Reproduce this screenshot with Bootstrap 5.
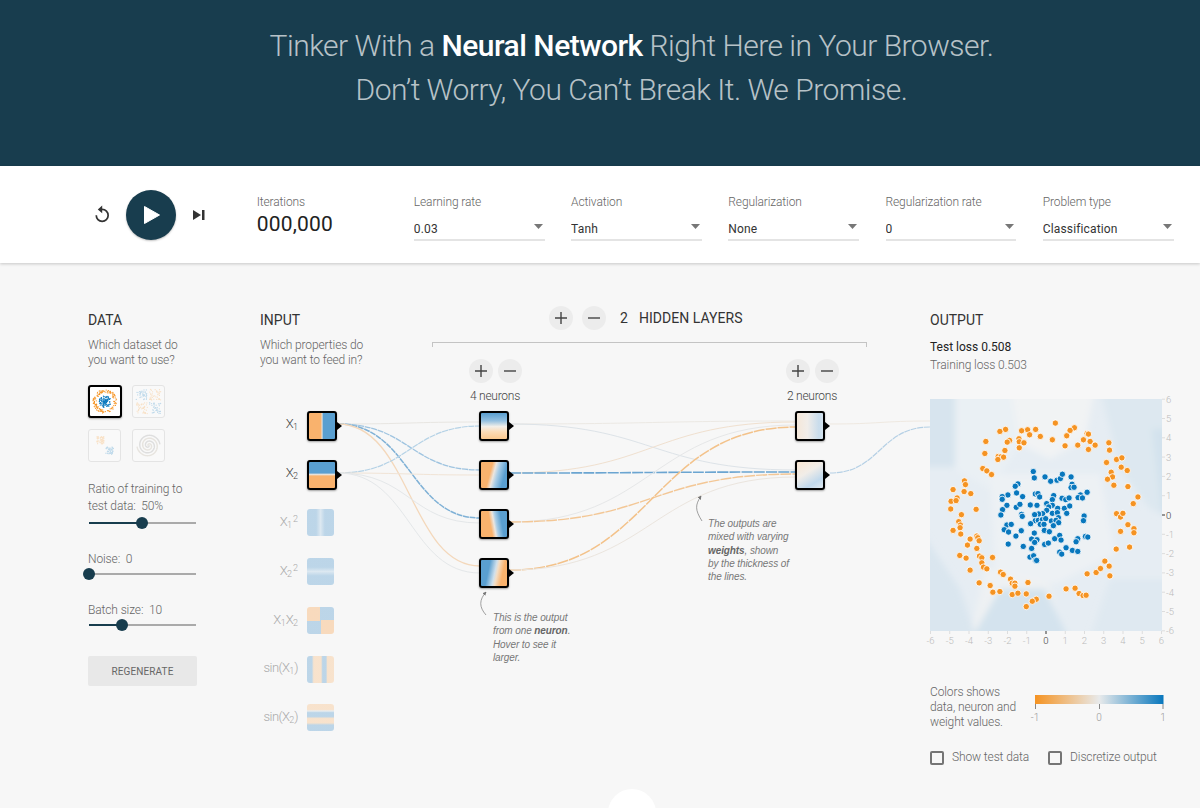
<!DOCTYPE html>
<html lang="en">
<head>
<meta charset="utf-8">
<title>Tinker With a Neural Network</title>
<link href="https://cdn.jsdelivr.net/npm/bootstrap@5.3.0/dist/css/bootstrap.min.css" rel="stylesheet">
<style>
html,body{height:808px;overflow:hidden}
body{font-family:Roboto,"Helvetica Neue",sans-serif;font-weight:300;background:#f7f7f7;color:#666;font-size:12px;line-height:15px;position:relative;letter-spacing:-.12px}
.hero{height:166px;background:#183d4e;color:rgba(255,255,255,.7);font-size:30px;font-weight:300;line-height:44px;padding-top:24px;letter-spacing:-.5px}
.hero b{font-weight:500;color:#fff}
.hero p{margin:0}
.hero-inner{padding-left:63px;width:1200px}
.ctrlbar{height:97px;margin-bottom:1px;background:#fff;box-shadow:0 1px 3px rgba(0,0,0,.2);position:relative;padding-top:29px}
.transport{width:257px;padding-left:92px;height:50px;margin-top:-5px}
.playbtn{width:50px;height:50px;border-radius:50%;background:#183d4e;border:0;padding:0;box-shadow:0 1px 2px rgba(0,0,0,.25)}
.ghostbtn{background:none;border:0;padding:0;line-height:0}
.iter{width:157.5px}
.lbl{color:#666;font-size:12px;line-height:14px;display:block}
.iternum{font-size:21px;line-height:30px;color:#222;letter-spacing:.2px;font-weight:400}
.pick{width:131px;margin-right:26.5px}
.pick select{font-size:12px;font-family:inherit;font-weight:400;color:#333;letter-spacing:.15px;border:0;border-bottom:2px solid #e4e4e4;border-radius:0;padding:8px 0 1px;margin-top:4px;height:28px;line-height:17px;background-color:transparent;background-image:url("data:image/svg+xml,%3Csvg xmlns='http://www.w3.org/2000/svg' width='9' height='5'%3E%3Cpath d='M0 0h9L4.5 5z' fill='%23777'/%3E%3C/svg%3E");background-size:9px 5px;background-position:right 2px center;box-shadow:none}
.stage{height:544px}
.col-data{width:109px;padding:48px 0 0 88px;box-sizing:content-box;flex:none;margin-right:63px}
.col-net{width:670px;flex:none;position:relative}
.col-out{width:270px;flex:none;padding-top:48px}
.sect{font-size:14px;line-height:16px;color:#333;margin:0 0 10px;font-weight:400;letter-spacing:0}
.desc{margin:0;line-height:15px}
.thumbs{display:grid;grid-template-columns:33px 33px;gap:10.5px;margin:17px 0 20px}
.thumb{width:33px;height:33px;border:1px solid #e4e4e4;border-radius:3px;padding:1px;line-height:0;background:#f9f9f9}
.thumb svg{display:block;width:100%;height:100%;opacity:.24}
.thumb.on{border:2px solid #000;background:#fff;padding:0;width:34px;box-shadow:0 1px 2px rgba(0,0,0,.3)}
.thumb.on svg{opacity:1}
.sl{display:block;margin-bottom:22.5px}
.sl .form-range{display:block;width:119px;height:12px;margin:1.5px 0 0 -5.5px;padding:0;background:none}
.form-range.track::-webkit-slider-runnable-track{height:12px;background:linear-gradient(90deg,transparent 6px,#183d4e 6px,#183d4e var(--p),#aaa var(--p),#aaa calc(100% - 6px),transparent calc(100% - 6px)) center/100% 2px no-repeat}
.form-range.track::-webkit-slider-thumb{width:12px;height:12px;margin-top:0;background:#183d4e;border:0;border-radius:50%;-webkit-appearance:none;appearance:none;box-shadow:none}
.regen{width:109px;height:30px;background:#e8e8e8;border:0;border-radius:2px;color:#666;font-size:10px;padding:0;margin-top:2.5px;letter-spacing:.1px}
.nethead{padding-top:48px;height:136px}
.nethead-in{width:172px;flex:none}
.nethead-hid{width:435px;flex:none;margin-top:-10px}
.hidtitle{height:32px;padding-left:117px;gap:9px;color:#333}
.rnd{width:24px;height:24px;border-radius:50%;background:#ececec;border:0;padding:0;line-height:0;display:inline-flex;align-items:center;justify-content:center}
.hidlabel{font-size:14px;color:#333;margin-left:5px;letter-spacing:.05px;font-weight:400}
.hidlabel span{margin-right:11px}
.bracket{height:5px;border:1px solid #c4c4c4;border-bottom:0;margin-top:8px}
.lays{padding:12px 5px 0 13px}
.lay{width:100px;text-align:center;color:#444;letter-spacing:-.25px}
.lay .d-flex{gap:5px;margin-bottom:6px}
.canvas{position:relative;height:340px}
.links{position:absolute;left:0;top:0}
.nd{position:absolute;width:30px;height:30px;border:2px solid #000;border-radius:3px;box-shadow:0 1px 2px rgba(0,0,0,.35)}
.nd::after{content:"";position:absolute;right:-7px;top:9px;border-left:5px solid #000;border-top:4px solid transparent;border-bottom:4px solid transparent}
.nd.off{width:27px;height:27px;border:0;box-shadow:none;opacity:.42}
.nd.off::after{display:none}
.flab{position:absolute;right:632px;width:60px;text-align:right;font-size:13px;line-height:20px;color:#444;white-space:nowrap;letter-spacing:-.6px}
.flab.off{color:#aaa}
.flab sub{font-size:9px;letter-spacing:0}
.flab sup{font-size:9px;margin-left:1px;letter-spacing:0}
.note{position:absolute;width:96px;font-size:10px;line-height:13.3px;font-style:italic;font-family:"Liberation Sans",sans-serif;font-weight:400;color:#777;letter-spacing:-.1px;white-space:nowrap}
.note b{font-weight:700;color:#666}
.loss{line-height:18px;margin:1px 0 25px;height:36px}
.loss .t{color:#222;font-weight:400;letter-spacing:0}
.plot{width:250px;height:250px;display:block;overflow:visible;letter-spacing:0}
.legend{margin-top:36px;gap:20px}
.legtext{width:85px;line-height:15px;flex:none;white-space:nowrap}
.legbar{overflow:visible;margin-top:7px;letter-spacing:0}
.opts{gap:19px;margin-top:20px}
.opts .form-check{padding:0;margin:0;min-height:0;display:flex;align-items:center;gap:8px}
.opts .form-check-input{width:14px;height:14px;margin:0;float:none;background-color:transparent;border:2px solid #757575;border-radius:2px;box-shadow:none}
.opts label{color:#666}
.moon{position:absolute;left:608px;top:789px;width:48px;height:48px;border-radius:50%;background:#fff}
</style>
</head>
<body>
<header class="hero text-center">
  <div class="hero-inner">
    <p>Tinker With a <b>Neural Network</b> Right Here in Your Browser.</p>
    <p>Don’t Worry, You Can’t Break It. We Promise.</p>
  </div>
</header>

<section class="ctrlbar d-flex">
  <div class="transport d-flex align-items-center">
    <button class="ghostbtn" style="margin-right:14px" aria-label="Reset">
      <svg width="20" height="20" viewBox="0 0 20 20"><path d="M10.200 3.600V.6L5.800 4.400l4.400 3.800V5.200a5.100 5.100 0 1 1-5.100 5.100H3.400a6.800 6.800 0 1 0 6.800-6.700z" fill="#333"/></svg>
    </button>
    <button class="playbtn" aria-label="Play">
      <svg width="50" height="50" viewBox="0 0 50 50"><path d="M19 16.500L34 25 19 33.500z" fill="#fff" stroke="#fff" stroke-width="1" transform="translate(-.5 0)"/></svg>
    </button>
    <button class="ghostbtn" style="margin-left:16px" aria-label="Step">
      <svg width="14" height="12" viewBox="0 0 14 12"><path d="M1 1l8 5-8 5z" fill="#333"/><rect x="10" y="1" width="2.500" height="10" fill="#333"/></svg>
    </button>
  </div>
  <div class="iter">
    <span class="lbl">Iterations</span>
    <div class="iternum">000,000</div>
  </div>
  <div class="pick"><label class="lbl">Learning rate</label><select class="form-select"><option>0.03</option></select></div>
  <div class="pick"><label class="lbl">Activation</label><select class="form-select"><option>Tanh</option></select></div>
  <div class="pick"><label class="lbl">Regularization</label><select class="form-select"><option>None</option></select></div>
  <div class="pick"><label class="lbl">Regularization rate</label><select class="form-select"><option>0</option></select></div>
  <div class="pick"><label class="lbl">Problem type</label><select class="form-select"><option>Classification</option></select></div>
</section>

<main class="stage d-flex">
  <section class="col-data">
    <h4 class="sect">DATA</h4>
    <p class="desc">Which dataset do<br>you want to use?</p>
    <div class="thumbs">
      <div class="thumb on"><svg id="th1" viewBox="30 27 694 695"></svg></div>
      <div class="thumb"><svg id="th2" viewBox="0 0 100 100"></svg></div>
      <div class="thumb"><svg id="th3" viewBox="0 0 100 100"></svg></div>
      <div class="thumb"><svg id="th4" viewBox="0 0 100 100"></svg></div>
    </div>
    <label class="sl">Ratio of training to<br><span style="line-height:19px">test data:&nbsp; 50%</span>
      <input type="range" class="form-range track" min="10" max="90" step="10" value="50" style="--p:50%">
    </label>
    <label class="sl">Noise:&nbsp; 0
      <input type="range" class="form-range track" min="0" max="50" step="5" value="0" style="--p:6px">
    </label>
    <label class="sl">Batch size:&nbsp; 10
      <input type="range" class="form-range track" min="1" max="30" step="1" value="10" style="--p:33%">
    </label>
    <button class="btn regen">REGENERATE</button>
  </section>

  <section class="col-net">
    <div class="nethead d-flex">
      <div class="nethead-in">
        <h4 class="sect">INPUT</h4>
        <p class="desc">Which properties do<br>you want to feed in?</p>
      </div>
      <div class="nethead-hid">
        <div class="hidtitle d-flex align-items-center">
          <button class="rnd" aria-label="Add layer"><svg width="12" height="12" viewBox="0 0 12 12"><path d="M6 0v12M0 6h12" stroke="#444" stroke-width="1.400"/></svg></button>
          <button class="rnd" aria-label="Remove layer"><svg width="12" height="12" viewBox="0 0 12 12"><path d="M0 6h12" stroke="#444" stroke-width="1.400"/></svg></button>
          <div class="hidlabel"><span>2</span>HIDDEN LAYERS</div>
        </div>
        <div class="bracket"></div>
        <div class="lays d-flex justify-content-between">
          <div class="lay">
            <div class="d-flex justify-content-center">
              <button class="rnd" aria-label="Add neuron"><svg width="12" height="12" viewBox="0 0 12 12"><path d="M6 0v12M0 6h12" stroke="#444" stroke-width="1.400"/></svg></button>
              <button class="rnd" aria-label="Remove neuron"><svg width="12" height="12" viewBox="0 0 12 12"><path d="M0 6h12" stroke="#444" stroke-width="1.400"/></svg></button>
            </div>
            4 neurons
          </div>
          <div class="lay">
            <div class="d-flex justify-content-center">
              <button class="rnd" aria-label="Add neuron"><svg width="12" height="12" viewBox="0 0 12 12"><path d="M6 0v12M0 6h12" stroke="#444" stroke-width="1.400"/></svg></button>
              <button class="rnd" aria-label="Remove neuron"><svg width="12" height="12" viewBox="0 0 12 12"><path d="M0 6h12" stroke="#444" stroke-width="1.400"/></svg></button>
            </div>
            2 neurons
          </div>
        </div>
      </div>
    </div>

    <div class="canvas">
      <svg class="links" width="670" height="340" viewBox="260 400 670 340" fill="none" stroke-linecap="butt">
        <marker id="ah" viewBox="0 0 6 6" refX="5" refY="3" markerWidth="5" markerHeight="5" orient="auto"><path d="M0 0l6 3-6 3z" fill="#777"/></marker>
        <!-- input to first hidden layer -->
        <path d="M338 424C410 424 410 422 480 422" stroke="#e8e6e2" stroke-width="1"/>
        <path d="M338 424C410 424 410 470 480 470" stroke="#9fc4e0" stroke-width="1.300" stroke-dasharray="6 .7"/>
        <path d="M338 424C410 424 410 518 480 518" stroke="#7fb1d6" stroke-width="1.500" stroke-dasharray="6 .7"/>
        <path d="M338 424C410 424 410 566 480 566" stroke="#f4d8bb" stroke-width="1.300"/>
        <path d="M338 473C410 473 410 426 480 426" stroke="#b5d2e6" stroke-width="1.200" stroke-dasharray="6 .7"/>
        <path d="M338 473C410 473 410 475 480 475" stroke="#f1e4d6" stroke-width="1"/>
        <path d="M338 473C410 473 410 523 480 523" stroke="#e4e7e9" stroke-width="1"/>
        <path d="M338 473C410 473 410 573 480 573" stroke="#e4e7e9" stroke-width="1"/>
        <!-- first to second hidden layer -->
        <path d="M510 424C652 424 652 421 796 421" stroke="#ece9e4" stroke-width="1"/>
        <path d="M510 424C652 424 652 470 796 470" stroke="#dde3e8" stroke-width="1"/>
        <path d="M510 473C652 473 652 422 796 422" stroke="#f0e0cf" stroke-width="1"/>
        <path d="M510 473C652 473 652 472 796 472" stroke="#6ba5d1" stroke-width="1.600" stroke-dasharray="11 1.200"/>
        <path d="M510 522C652 522 652 425 796 425" stroke="#e6e7e8" stroke-width="1"/>
        <path d="M510 522C652 522 652 474 796 474" stroke="#f3c796" stroke-width="1.400" stroke-dasharray="11 1"/>
        <path d="M510 570C652 570 652 427 796 427" stroke="#f3c28a" stroke-width="1.500" stroke-dasharray="11 1"/>
        <path d="M510 570C652 570 652 477 796 477" stroke="#ebe5de" stroke-width="1"/>
        <!-- second hidden layer to output -->
        <path d="M830 424C880 424 880 421 930 421" stroke="#efe9e1" stroke-width="1"/>
        <path d="M830 473C880 473 880 427 930 427" stroke="#b5d0e5" stroke-width="1.200" stroke-dasharray="6 .7"/>
        <!-- annotation arrows -->
        <path d="M702 521C695 510 695 505 701 496" stroke="#888" stroke-width=".8" marker-end="url(#ah)"/>
        <path d="M486 615C479 607 479 600 486 592" stroke="#888" stroke-width=".8" marker-end="url(#ah)"/>
      </svg>

      <div class="flab" style="top:14px">X<sub>1</sub></div>
      <div class="flab" style="top:63px">X<sub>2</sub></div>
      <div class="flab off" style="top:112px">X<sub>1</sub><sup>2</sup></div>
      <div class="flab off" style="top:161px">X<sub>2</sub><sup>2</sup></div>
      <div class="flab off" style="top:210px">X<sub>1</sub>X<sub>2</sub></div>
      <div class="flab off" style="top:258px">sin(X<sub>1</sub>)</div>
      <div class="flab off" style="top:307px">sin(X<sub>2</sub>)</div>

      <div class="nd" style="left:47px;top:11px;background:linear-gradient(90deg,#f9b26d 0 46%,#e6e2dc 50%,#5a9fd0 55%)"></div>
      <div class="nd" style="left:47px;top:60px;background:linear-gradient(180deg,#5a9fd0 0 42%,#e6e2dc 48%,#f9b26d 54%)"></div>
      <div class="nd off" style="left:47px;top:109px;background:linear-gradient(90deg,#6ba7d4 0 34%,#b7d3e8 50%,#6ba7d4 66%)"></div>
      <div class="nd off" style="left:47px;top:158px;background:linear-gradient(180deg,#6ba7d4 0 34%,#b7d3e8 50%,#6ba7d4 66%)"></div>
      <div class="nd off" style="left:47px;top:207px;background:conic-gradient(#6ba7d4 0 25%,#f9b26d 25% 50%,#6ba7d4 50% 75%,#f9b26d 75%)"></div>
      <div class="nd off" style="left:47px;top:256px;background:linear-gradient(90deg,#6ba7d4 0 18%,#f9c692 25% 52%,#6ba7d4 58% 70%,#f9c692 76%)"></div>
      <div class="nd off" style="left:47px;top:304px;background:linear-gradient(180deg,#f9c692 0 20%,#d5dfe5 26%,#6ba7d4 32% 46%,#f9c692 54% 70%,#6ba7d4 78%)"></div>

      <div class="nd" style="left:219px;top:11px;background:linear-gradient(180deg,#5a9fd0 0,#94c0e0 30%,#f2efe9 52%,#fbdcb8 72%,#fbc98f 100%)"></div>
      <div class="nd" style="left:219px;top:60px;background:linear-gradient(105deg,#f9b26d 0 36%,#ece6df 48%,#a9cde6 60%,#5a9fd0 82%)"></div>
      <div class="nd" style="left:219px;top:109px;background:linear-gradient(80deg,#f9b26d 0 38%,#ece6df 50%,#a9cde6 58%,#5a9fd0 76%)"></div>
      <div class="nd" style="left:219px;top:158px;background:linear-gradient(102deg,#5a9fd0 0 30%,#cfe0ec 52%,#f3ddc4 60%,#f9b26d 78%)"></div>
      <div class="nd" style="left:535px;top:11px;background:linear-gradient(90deg,#f4e7d9 0,#f1ede9 40%,#c8dcec 85%,#d6e4ef 100%)"></div>
      <div class="nd" style="left:535px;top:60px;background:linear-gradient(148deg,#f8e6d2 0,#f1ede8 40%,#c0d8ec 75%,#dfe8ef 100%)"></div>

      <div class="note" style="left:448px;top:117px">The outputs are<br>mixed with varying<br><b>weights</b>, shown<br>by the thickness of<br>the lines.</div>
      <div class="note" style="left:233px;top:211px;width:84px">This is the output<br>from one <b>neuron</b>.<br>Hover to see it<br>larger.</div>
    </div>
  </section>

  <section class="col-out">
    <h4 class="sect">OUTPUT</h4>
    <div class="loss"><div class="t">Test loss 0.508</div><div>Training loss 0.503</div></div>
    <svg class="plot" id="plot" viewBox="0 0 250 250"></svg>
    <div class="legend d-flex">
      <div class="legtext">Colors shows<br>data, neuron and<br>weight values.</div>
      <svg class="legbar" width="136" height="36" viewBox="0 0 136 36">
        <defs><linearGradient id="lg"><stop offset="0" stop-color="#f59322"/><stop offset=".5" stop-color="#e8eaeb"/><stop offset="1" stop-color="#0877bd"/></linearGradient></defs>
        <rect x="0" y="3" width="128.500" height="9" fill="url(#lg)"/>
        <path d="M.5 12v5M64.500 12v5M128 12v5" stroke="#888" stroke-width="1"/>
        <g font-size="10" fill="#999" text-anchor="middle" font-family="Roboto"><text x="0" y="29">-1</text><text x="64" y="29">0</text><text x="128" y="29">1</text></g>
      </svg>
    </div>
    <div class="opts d-flex">
      <div class="form-check"><input class="form-check-input" type="checkbox" id="c1"><label class="form-check-label" for="c1">Show test data</label></div>
      <div class="form-check"><input class="form-check-input" type="checkbox" id="c2"><label class="form-check-label" for="c2">Discretize output</label></div>
    </div>
  </section>
</main>
<div class="moon"></div>

<script src="https://cdn.jsdelivr.net/npm/bootstrap@5.3.0/dist/js/bootstrap.bundle.min.js"></script>
<script>
var O=[405,99,462,113,449,121,439,137,500,130,504,132,489,149,509,154,524,165,472,165,504,178,434,167,396,149,360,139,346,118,322,119,304,122,328,134,296,146,297,155,311,158,297,173,268,151,261,156,254,181,256,118,239,124,197,154,194,190,234,199,242,200,250,201,233,208,188,235,200,242,214,253,565,158,567,180,558,217,588,208,604,203,602,231,620,241,572,246,576,260,561,267,580,285,622,289,652,320,638,340,133,272,136,283,99,298,132,304,152,310,111,323,93,333,108,331,92,356,168,357,124,373,116,394,121,404,120,412,99,420,122,431,150,446,170,437,173,442,177,451,142,464,170,474,119,495,138,503,178,497,185,502,217,501,185,517,190,530,200,535,150,539,241,545,249,552,271,566,177,577,210,585,218,605,239,603,276,578,284,578,284,587,323,576,276,612,293,608,318,610,386,617,348,626,336,632,318,648,437,595,464,593,476,609,488,615,497,614,500,550,527,546,540,534,553,512,566,527,568,556,588,370,600,380,607,369,622,403,640,415,640,427,600,423,627,470,587,476];
var B=[339,244,342,263,374,260,391,273,410,270,420,265,426,252,452,260,455,282,452,292,461,291,500,306,480,314,473,322,486,323,425,324,436,328,446,323,293,281,285,288,289,308,263,314,246,319,246,327,307,319,345,311,353,310,358,320,400,316,396,328,260,345,247,358,242,374,288,351,299,342,330,344,350,345,379,340,396,345,385,350,412,354,432,354,448,347,439,369,379,360,367,370,355,371,343,373,304,372,306,378,396,369,411,367,414,382,491,377,489,391,345,391,354,390,366,388,376,385,393,392,407,390,415,397,331,400,360,402,371,402,399,406,260,404,273,402,252,418,265,425,303,421,287,437,342,428,372,420,387,424,334,446,350,448,343,456,403,445,418,435,422,449,373,462,384,458,472,445,467,454,437,472,456,480,472,483,418,485,424,491,495,438,502,440,264,461,309,468,334,474,329,500,340,496,346,509,349,510];
function dots(A,c,r,sw){var s='';for(var i=0;i<A.length;i+=2)s+='<circle cx="'+A[i]+'" cy="'+A[i+1]+'" r="'+r+'" fill="'+c+'"'+(sw?' stroke="#fff" stroke-width="'+sw+'"':'')+'/>';return s}
/* dataset thumbnails */
document.getElementById('th1').innerHTML=dots(O,'#f59322',15)+dots(B,'#0877bd',15);
var seed=7;function rnd(){seed=(seed*16807)%2147483647;return seed/2147483647}
function cluster(cx,cy,sp,n,c){var s='';for(var i=0;i<n;i++){s+='<circle cx="'+(cx+(rnd()-.5)*sp)+'" cy="'+(cy+(rnd()-.5)*sp)+'" r="2.2" fill="'+c+'"/>'}return s}
document.getElementById('th2').innerHTML=cluster(27,27,38,40,'#0877bd')+cluster(73,27,38,40,'#f59322')+cluster(27,73,38,40,'#f59322')+cluster(73,73,38,40,'#0877bd');
document.getElementById('th3').innerHTML=cluster(36,32,26,50,'#f59322')+cluster(68,68,26,50,'#0877bd');
var sp='',sp2='';for(var t=0;t<120;t++){var a=t/120*4*Math.PI,rr=t/120*40;sp+=(t?'L':'M')+(50+rr*Math.cos(a)).toFixed(1)+' '+(50+rr*Math.sin(a)).toFixed(1);sp2+=(t?'L':'M')+(50-rr*Math.cos(a)).toFixed(1)+' '+(50-rr*Math.sin(a)).toFixed(1)}
document.getElementById('th4').innerHTML='<path d="'+sp+'" fill="none" stroke="#8c8c8c" stroke-width="5"/><path d="'+sp2+'" fill="none" stroke="#b0a48e" stroke-width="5"/>';
/* output plot: canvas 232 px at origin of this svg */
var k=232/694,p='<defs><filter id="bl" x="-20%" y="-20%" width="140%" height="140%"><feGaussianBlur stdDeviation="3"/></filter><clipPath id="cp"><rect width="232" height="232"/></clipPath></defs><g clip-path="url(#cp)"><rect width="232" height="232" fill="#e6edf3"/><g filter="url(#bl)">'
+'<rect x="-10" y="-10" width="35" height="78" fill="#d7e4ee"/><path d="M80 -10H165L155 40 120 60 90 45z" fill="#f1f3f4"/><path d="M25 -10H80L90 45 60 90 25 70z" fill="#eaf0f4"/><path d="M170 -10H245V120L220 110 190 70z" fill="#dde8f0"/><path d="M222 30h20v85h-10z" fill="#d3e2ed"/><path d="M55 170h60l20 70H40z" fill="#eef1f3"/><path d="M40 242L70 190H115L140 242z" fill="#d4e3ee"/><path d="M60 75h110l15 80-60 30-60-15z" fill="#edf1f4"/><path d="M-10 130l40 60 20 60H-10z" fill="#dae6ef"/><path d="M180 180h60v60h-80z" fill="#dfe9f1"/></g></g>';
p+='<g transform="scale('+k+') translate(-30 -27)">'+dots(O,'#f59322',9.5,2.5)+dots(B,'#0877bd',9.5,2.5)+'</g>';
p+='<g font-size="9.500" font-family="Roboto" fill="#bbb">';
for(var v=-6;v<=6;v++){var y=116-v*19.3,x=116+v*19.25,z=v==0;
 p+='<path d="M232 '+y+'h3M'+x+' 232v3" stroke="'+(z?'#333':'#ddd')+'" stroke-width="1"/>';
 p+='<text x="236" y="'+(y+3.500)+'" fill="'+(z?'#333':'#bbb')+'">'+v+'</text>';
 p+='<text x="'+x+'" y="245" text-anchor="middle" fill="'+(z?'#333':'#bbb')+'">'+v+'</text>';}
p+='</g>';
document.getElementById('plot').innerHTML=p;
</script>
</body>
</html>
